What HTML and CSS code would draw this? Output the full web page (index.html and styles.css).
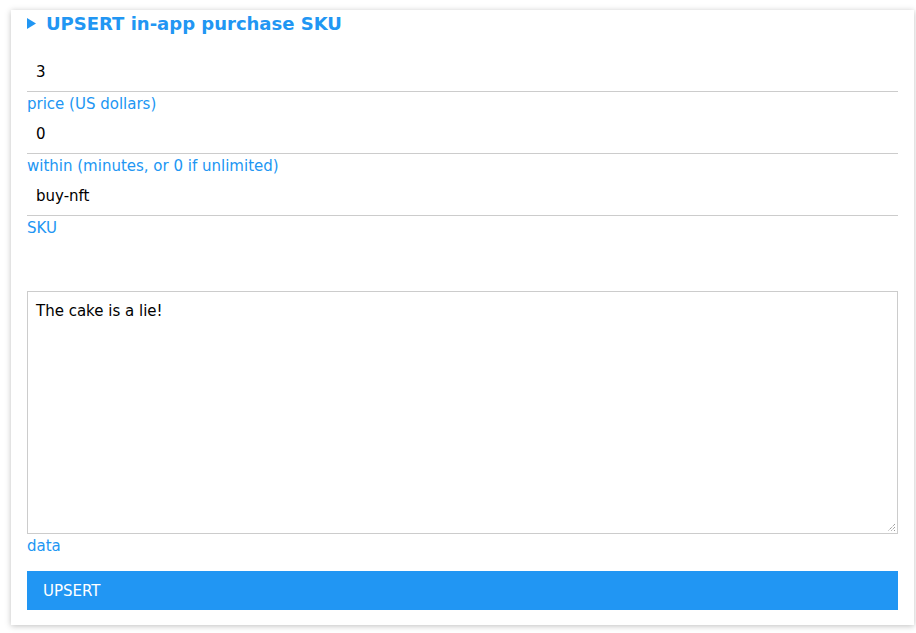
FILE: index.html
```html
<!DOCTYPE html>
<html>
<head>
<meta charset="utf-8">
<link rel="stylesheet" href="styles.css">
</head>
<body>
<div class="card">
  <div class="title">
    <svg class="tri" width="9" height="11" viewBox="0 0 9 11"><polygon points="0,0 9,5.5 0,11" fill="#2196F3"/></svg>
    <span>UPSERT in-app purchase SKU</span>
  </div>
  <div class="field first">
    <div class="input">3</div>
    <div class="label">price (US dollars)</div>
  </div>
  <div class="field">
    <div class="input">0</div>
    <div class="label">within (minutes, or 0 if unlimited)</div>
  </div>
  <div class="field">
    <div class="input">buy-nft</div>
    <div class="label">SKU</div>
  </div>
  <div class="areafield">
    <div class="textarea">The cake is a lie!
      <svg class="grip" width="9" height="9" viewBox="0 0 9 9"><path d="M8 1 L1 8 M8 4 L4 8 M8 7 L7 8" stroke="#777" stroke-width="1" stroke-dasharray="1 1"/></svg>
    </div>
    <div class="label">data</div>
  </div>
  <div class="button">UPSERT</div>
</div>
</body>
</html>
```
FILE: styles.css
```css
html, body {
  margin: 0;
  background: #fff;
}
body {
  padding: 10px 2px 8px 11px;
  font-family: "DejaVu Sans", sans-serif;
  font-size: 15px;
}
.card {
  width: 903px;
  box-sizing: border-box;
  background: #fff;
  box-shadow: 0 1px 6px rgba(0,0,0,0.25);
  padding: 0 16px 15px;
}
.title {
  display: flex;
  align-items: center;
  height: 27px;
  color: #2196F3;
  font-weight: bold;
  font-size: 18px;
  gap: 10px;
}
.tri { display: block; }
.field.first { margin-top: 15px; }
.input {
  height: 40px;
  box-sizing: border-box;
  border-bottom: 1px solid #ccc;
  padding: 0 9px;
  display: flex;
  align-items: center;
  color: #000;
}
.label {
  color: #2196F3;
  height: 22px;
  line-height: 24px;
}
.areafield { margin-top: 53px; }
.textarea {
  position: relative;
  height: 243px;
  box-sizing: border-box;
  border: 1px solid #ccc;
  padding: 10px 8px;
  line-height: 18px;
  color: #000;
}
.grip {
  position: absolute;
  right: 1px;
  bottom: 1px;
}
.button {
  margin-top: 15px;
  height: 39px;
  padding: 1px 16px 0;
  box-sizing: border-box;
  background: #2196F3;
  color: #fff;
  display: flex;
  align-items: center;
}
```
